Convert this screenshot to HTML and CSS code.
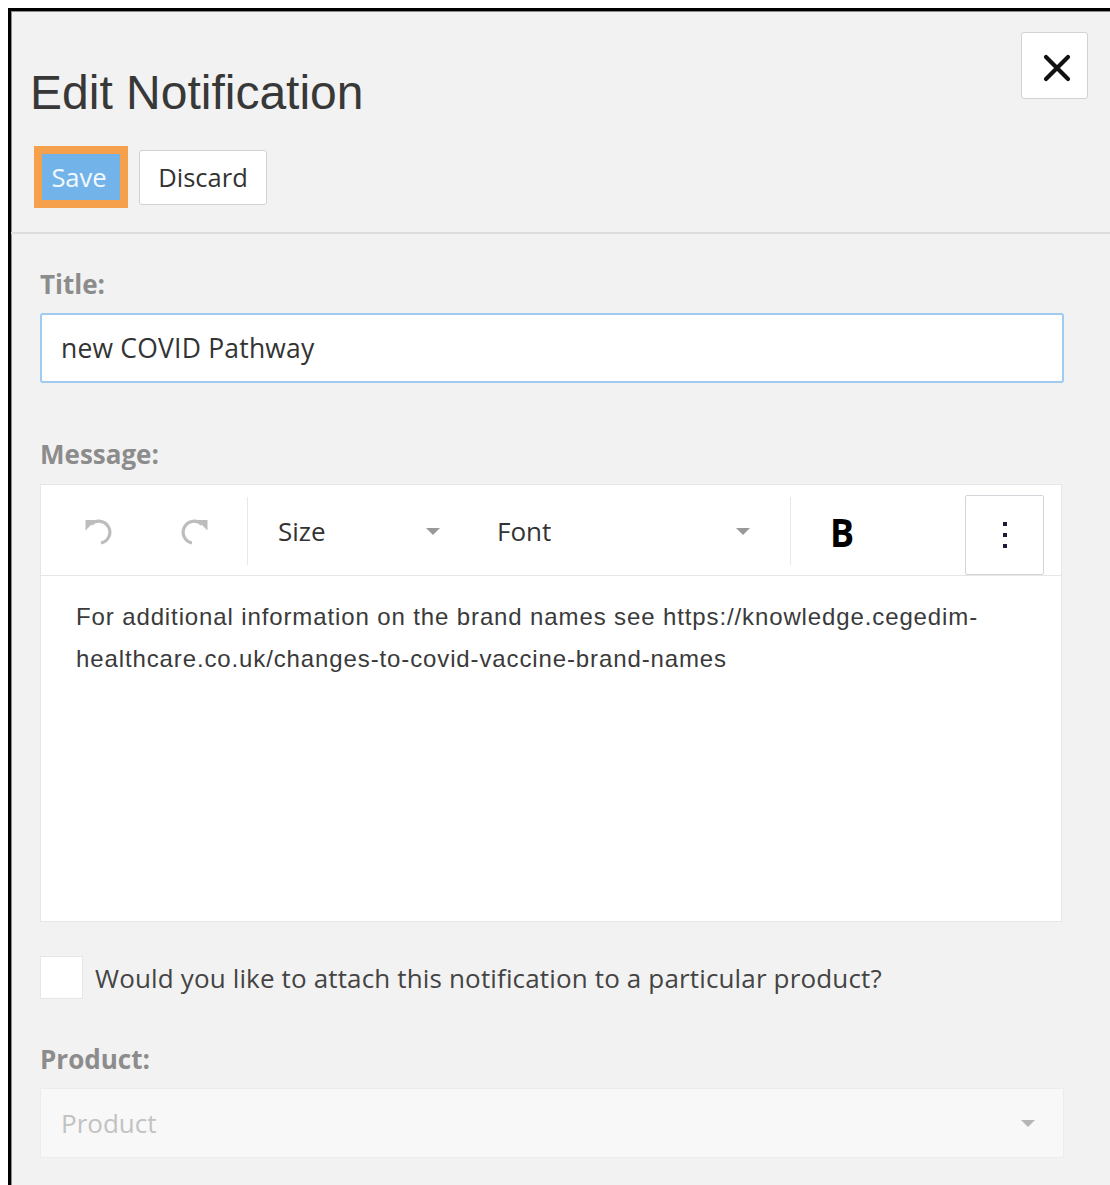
FILE: index.html
```html
<!DOCTYPE html>
<html lang="en">
<head>
<meta charset="utf-8">
<title>Edit Notification</title>
<link rel="stylesheet" href="styles.css">
</head>
<body>
<div class="dialog">
  <header class="dialog-header">
    <div class="header-main">
      <h1 class="dialog-title">Edit Notification</h1>
      <div class="actions">
        <button class="btn btn-save" type="button">Save</button>
        <button class="btn btn-discard" type="button">Discard</button>
      </div>
    </div>
    <button class="btn-close" type="button" aria-label="Close">
      <svg width="28" height="28" viewBox="0 0 28 28" aria-hidden="true">
        <path d="M3 3 L25 25 M25 3 L3 25" stroke="#111" stroke-width="4.2" stroke-linecap="round"/>
      </svg>
    </button>
  </header>

  <div class="dialog-body">
    <div class="field-label">Title:</div>
    <div class="text-input">new COVID Pathway</div>

    <div class="field-label label-message">Message:</div>
    <div class="editor">
      <div class="toolbar">
        <div class="tool-group history">
          <span class="tool-icon">
            <svg width="28" height="28" viewBox="0 0 28 28" aria-hidden="true">
              <path d="M0.5 3 L11 3 L0.5 13.5 Z" fill="#bdbdbd"/>
              <path d="M6 7.5 A11 11 0 1 1 16 26" fill="none" stroke="#bdbdbd" stroke-width="3.2"/>
            </svg>
          </span>
          <span class="tool-icon">
            <svg width="28" height="28" viewBox="0 0 28 28" aria-hidden="true">
              <g transform="translate(28 0) scale(-1 1)">
                <path d="M0.5 3 L11 3 L0.5 13.5 Z" fill="#bdbdbd"/>
                <path d="M6 7.5 A11 11 0 1 1 16 26" fill="none" stroke="#bdbdbd" stroke-width="3.2"/>
              </g>
            </svg>
          </span>
        </div>
        <div class="tool-group formats">
          <div class="dropdown dropdown-size"><span>Size</span><i class="caret"></i></div>
          <div class="dropdown dropdown-font"><span>Font</span><i class="caret"></i></div>
        </div>
        <div class="tool-group styles">
          <span class="bold-btn">B</span>
        </div>
        <button class="more-btn" type="button" aria-label="More">
          <span class="dot"></span><span class="dot"></span><span class="dot"></span>
        </button>
      </div>
      <div class="editor-content">For additional information on the brand names see https://knowledge.cegedim-healthcare.co.uk/changes-to-covid-vaccine-brand-names</div>
    </div>

    <label class="check-row">
      <span class="checkbox"></span>
      <span class="check-text">Would you like to attach this notification to a particular product?</span>
    </label>

    <div class="field-label">Product:</div>
    <div class="select">
      <span class="placeholder">Product</span>
      <i class="caret caret-light"></i>
    </div>
  </div>
</div>
</body>
</html>
```
FILE: styles.css
```css
html, body {
  height: 100%;
  overflow: hidden;
}

body {
  margin: 8px 0 0 8px;
  background: #ffffff;
  font-family: "Open Sans", "Liberation Sans", sans-serif;
  color: #333;
}

.dialog {
  box-sizing: border-box;
  min-height: calc(100vh - 8px);
  background: #f2f2f2;
  border-top: 3px solid #000;
  border-left: 3px solid #000;
  box-shadow: inset 1px 1px 0 #8c8c8c;
}

/* header */
.dialog-header {
  display: flex;
  justify-content: space-between;
  align-items: flex-start;
  padding: 21px 22px 24px 19px;
  border-bottom: 2px solid #dcdcdc;
}

.dialog-title {
  margin: 37px 0 0 0;
  font-family: "Liberation Sans", Arial, sans-serif;
  font-weight: normal;
  font-size: 48px;
  line-height: 48px;
  color: #383838;
}

.actions {
  display: flex;
  align-items: center;
  margin: 29px 0 0 4px;
}

.btn {
  font-family: "Open Sans", sans-serif;
  font-size: 25.5px;
  cursor: pointer;
}

.btn-save {
  box-sizing: border-box;
  height: 62px;
  width: 94px;
  padding: 0 4px 0 0;
  border: 8px solid #f4a04c;
  background: #72b4e9;
  color: #f4f9ff;
}

.btn-discard {
  box-sizing: border-box;
  height: 55px;
  width: 128px;
  margin-left: 11px;
  padding: 0;
  border: 1px solid #cfd3d6;
  border-radius: 3px;
  background: #fff;
  color: #333;
}

.btn-close {
  box-sizing: border-box;
  width: 67px;
  height: 67px;
  display: flex;
  align-items: center;
  justify-content: center;
  padding: 4px 0 0 4px;
  border: 1px solid #cfd3d6;
  border-radius: 3px;
  background: #fff;
}

/* body */
.dialog-body {
  padding: 34px 46px 0 29px;
}

.field-label {
  font-weight: bold;
  font-size: 26px;
  line-height: 32px;
  color: #8c8c8c;
  margin-bottom: 13px;
}

.text-input {
  box-sizing: border-box;
  height: 70px;
  display: flex;
  align-items: center;
  padding: 0 19px;
  border: 2px solid #9fcbf1;
  border-radius: 3px;
  background: #fff;
  font-size: 26.5px;
  letter-spacing: 0.2px;
  color: #333;
  margin-bottom: 55px;
}

.label-message {
  margin-bottom: 14px;
}

/* rich text editor */
.editor {
  box-sizing: border-box;
  width: 1022px;
  border: 1px solid #e6e6e6;
  background: #fff;
}

.toolbar {
  display: flex;
  align-items: center;
  height: 91px;
  padding: 10px 17px 0 0;
  box-sizing: border-box;
  border-bottom: 1px solid #e6e6e6;
  font-size: 26px;
  color: #333;
}

.tool-group {
  display: flex;
  align-items: center;
  height: 68px;
  margin-top: -8px;
  border-right: 1px solid #e8e8e8;
}

.history {
  padding: 0 39px 0 44px;
  gap: 67px;
}

.tool-icon {
  display: flex;
  width: 28px;
  height: 28px;
}

.formats {
  padding: 0 40px 0 30px;
}

.dropdown {
  display: flex;
  align-items: center;
  justify-content: space-between;
}

.dropdown-size {
  width: 162px;
}

.dropdown-font {
  width: 253px;
  margin-left: 57px;
}

.caret {
  display: block;
  width: 0;
  height: 0;
  border-left: 7.5px solid transparent;
  border-right: 7.5px solid transparent;
  border-top: 7px solid #999;
}

.styles {
  border-right: none;
  padding-left: 38px;
}

.bold-btn {
  font-family: "Open Sans", sans-serif;
  font-weight: bold;
  font-size: 39px;
  color: #000;
  transform: scaleX(0.92);
}

.more-btn {
  box-sizing: border-box;
  margin-left: auto;
  width: 79px;
  height: 80px;
  display: flex;
  flex-direction: column;
  align-items: center;
  justify-content: center;
  gap: 7px;
  padding: 0;
  border: 1px solid #d2d5d9;
  border-radius: 2px;
  background: #fff;
}

.dot {
  width: 4px;
  height: 4px;
  background: #1f1a3a;
}

.editor-content {
  box-sizing: border-box;
  height: 345px;
  padding: 20px 35px 0 35px;
  font-family: "Liberation Sans", Arial, sans-serif;
  font-size: 24px;
  letter-spacing: 0.88px;
  line-height: 42px;
  color: #3a3a3a;
}

/* checkbox row */
.check-row {
  display: flex;
  align-items: center;
  margin: 34px 0 44px 0;
}

.checkbox {
  box-sizing: border-box;
  width: 43px;
  height: 43px;
  border: 1px solid #e6e6e6;
  background: #fff;
  flex: none;
}

.check-text {
  margin-left: 12px;
  font-size: 26px;
  letter-spacing: 0.15px;
  line-height: 32px;
  color: #444;
}

/* product select */
.select {
  box-sizing: border-box;
  height: 70px;
  display: flex;
  align-items: center;
  justify-content: space-between;
  padding: 0 28px 0 20px;
  border: 1px solid #ececec;
  border-radius: 2px;
  background: #f8f8f8;
  font-size: 26px;
}

.placeholder {
  color: #c2c2c2;
}

.caret-light {
  border-top-color: #b5b5b5;
}
```
